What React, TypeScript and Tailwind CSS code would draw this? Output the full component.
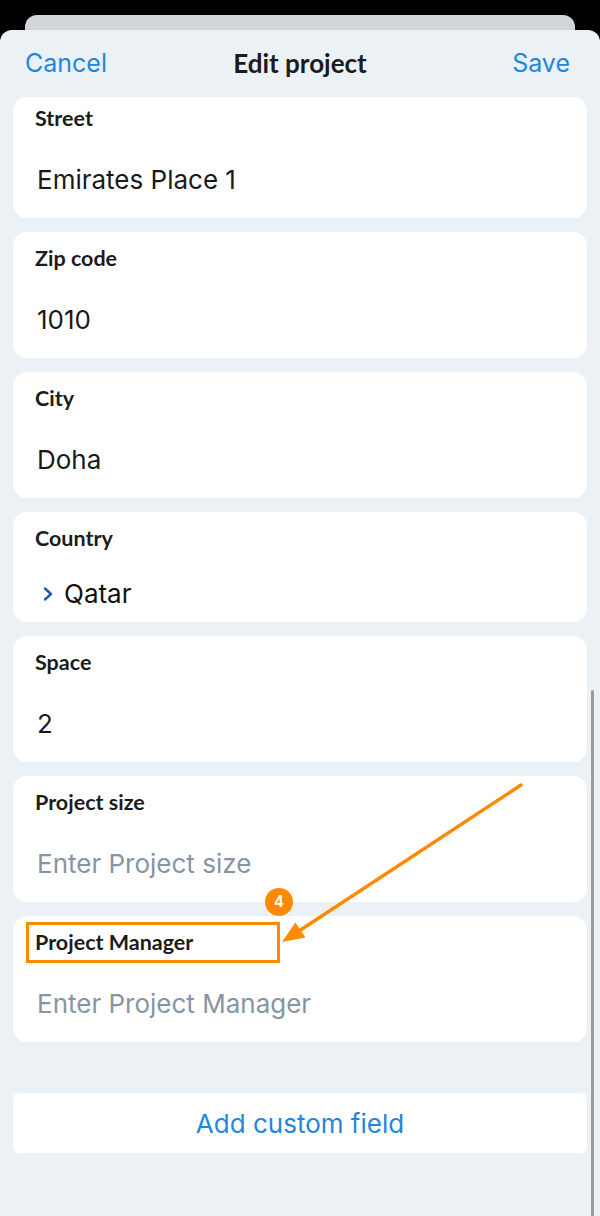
import React from 'react';

const label = "font-['Lato'] font-bold text-[21.5px] leading-[24px] text-[#1c1c1c] -ml-[2px]";
const value = "font-['Inter','Noto_Sans',sans-serif] text-[26px] leading-[32px] text-[#1a1a1a]";
const placeholder = "font-['Inter','Noto_Sans',sans-serif] text-[26px] leading-[32px] text-[#8795a3]";

const Field = ({ title, text, empty, first }: { title: string; text: string; empty?: boolean; first?: boolean }) => (
    <div className={`bg-white rounded-[14px] px-[24px] pb-[22px] ${first ? 'pt-[9px]' : 'pt-[14px]'}`}>
        <div className={label}>{title}</div>
        <div className={`mt-[34px] ${empty ? placeholder : value}`}>{text}</div>
    </div>
);

export default function App() {
    return (
        <div className="relative w-[600px] h-[1216px] bg-black overflow-hidden flex flex-col">
            {/* card peeking behind the sheet */}
            <div className="mt-[15px] mx-[25px] h-[15px] shrink-0 rounded-t-[12px] bg-[#d1d6db]" />

            <div className="flex-1 rounded-t-[12px] bg-[#ecf1f5] flex flex-col">
                {/* Header */}
                <div className="relative h-[67px] shrink-0 flex items-center justify-between pl-[25px] pr-[30px]">
                    <span className="font-['Inter','Noto_Sans',sans-serif] text-[25px] text-[#1f87dc]">Cancel</span>
                    <span className="absolute left-0 right-0 text-center pointer-events-none font-['Lato'] font-bold text-[26px] text-[#1c1c1c]">Edit project</span>
                    <span className="font-['Inter','Noto_Sans',sans-serif] text-[25px] text-[#1f87dc]">Save</span>
                </div>

                {/* Form */}
                <div className="flex flex-col gap-[14px] px-[13px]">
                    <Field first title="Street" text="Emirates Place 1" />
                    <Field title="Zip code" text="1010" />
                    <Field title="City" text="Doha" />

                    <div className="bg-white rounded-[14px] px-[24px] pt-[14px] pb-[12px]">
                        <div className={label}>Country</div>
                        <div className="mt-[28px] flex items-center h-[32px]">
                            <svg width="14" height="16" viewBox="0 0 14 16" className="ml-[4px] mr-[9px]">
                                <path d="M4 2.5 L10 8 L4 13.5" fill="none" stroke="#1d5ba8" strokeWidth="2.4" strokeLinecap="round" strokeLinejoin="round" />
                            </svg>
                            <span className="font-['Inter','Noto_Sans',sans-serif] text-[26px] leading-[32px] text-[#111]">Qatar</span>
                        </div>
                    </div>

                    <Field title="Space" text="2" />
                    <Field title="Project size" text="Enter Project size" empty />
                    <Field title="Project Manager" text="Enter Project Manager" empty />

                    <div className="mt-[37px] h-[60px] bg-white rounded-[6px] flex items-center justify-center">
                        <span className="font-['Inter','Noto_Sans',sans-serif] text-[26px] text-[#1f87dc]">Add custom field</span>
                    </div>
                </div>
            </div>

            {/* scrollbar */}
            <div className="absolute left-[591px] top-[690px] w-[3px] h-[540px] rounded-full bg-[#9b9b9b]" />

            {/* Annotation */}
            <div className="absolute left-[26px] top-[922px] w-[254px] h-[41px] border-[3px] border-[#ff8a00]" />
            <div className="absolute left-[265px] top-[888px] w-[28px] h-[28px] rounded-full bg-[#ff8a00] flex items-center justify-center">
                <span className="font-['Liberation_Sans',sans-serif] font-bold text-[16px] text-white leading-none">4</span>
            </div>
            <svg className="absolute left-0 top-0 pointer-events-none" width="600" height="1216">
                <line x1="521" y1="785" x2="299" y2="931" stroke="#ff8a00" strokeWidth="3.5" strokeLinecap="round" />
                <polygon points="282,942 305.4,937.4 295.4,922.4" fill="#ff8a00" />
            </svg>
        </div>
    );
}
